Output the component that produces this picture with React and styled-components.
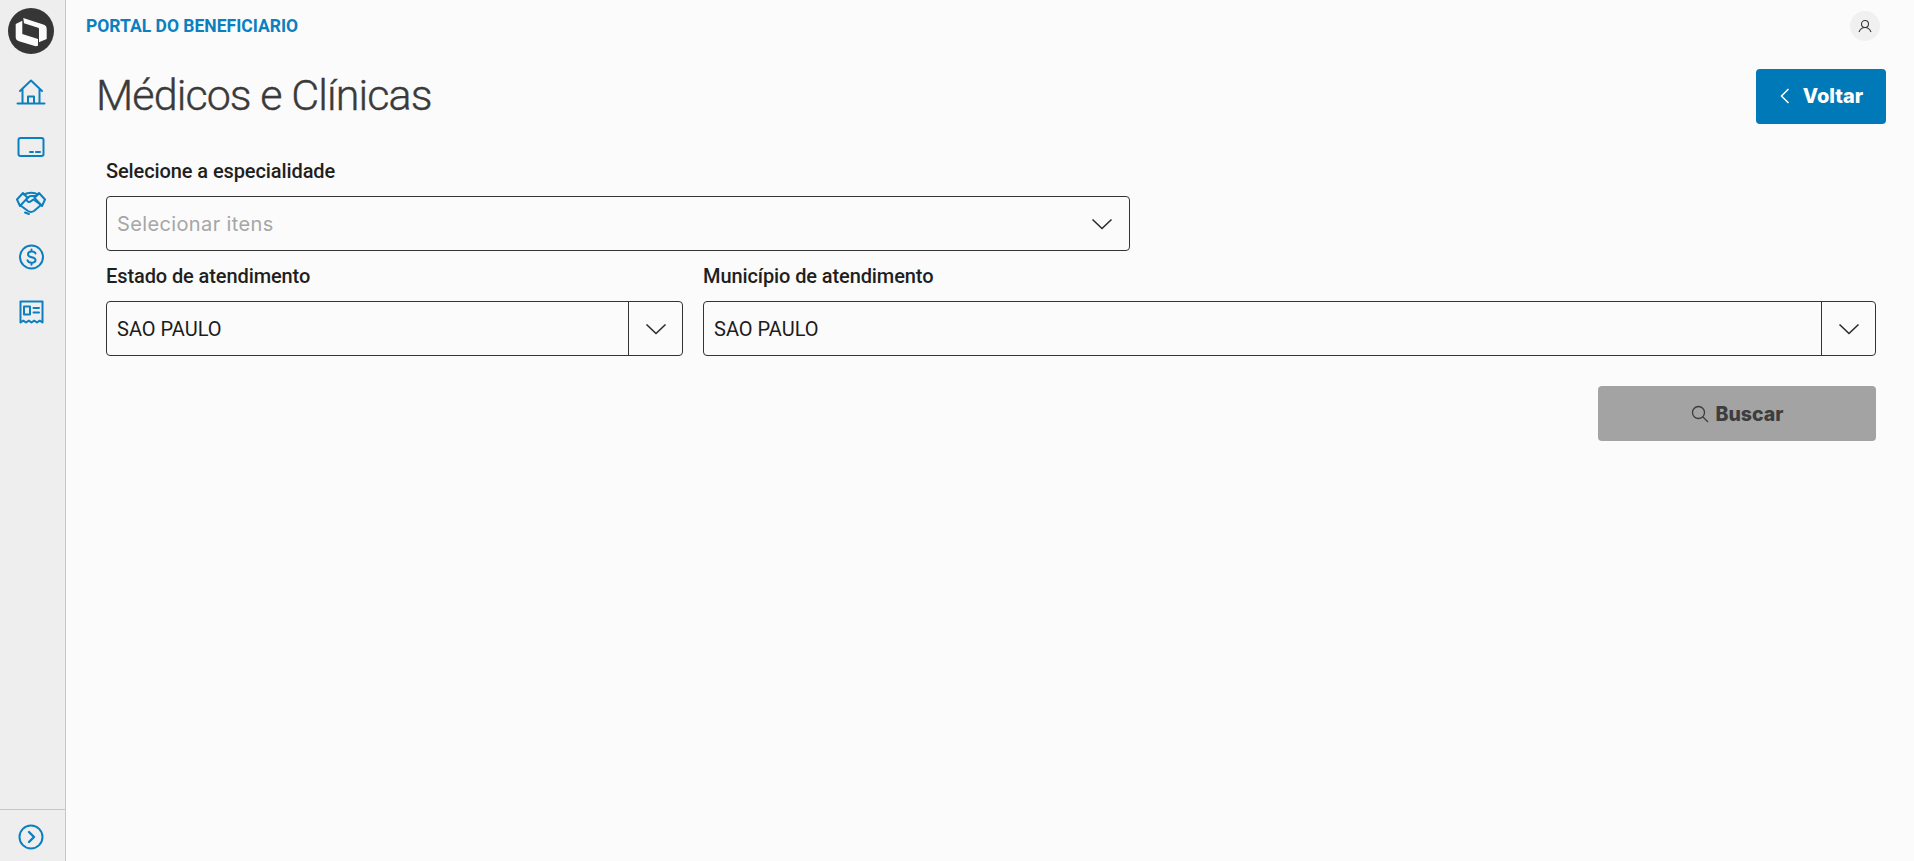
import React from "react";
import styled, { createGlobalStyle } from "styled-components";

const Global = createGlobalStyle`
  html, body { margin: 0; padding: 0; height: 100%; background: #fbfbfb; overflow: hidden; }
  #root { height: 100%; }
  * { box-sizing: border-box; }
`;

const Shell = styled.div`
  display: flex;
  width: 1914px;
  height: 861px;
  background: #fbfbfb;
  font-family: Roboto, "Liberation Sans", sans-serif;
`;

const Sidebar = styled.aside`
  width: 66px;
  flex: none;
  display: flex;
  flex-direction: column;
  background: #eeeeee;
  border-right: 1px solid #c6c6c6;
`;

const LogoWrap = styled.div`
  height: 62px;
  padding: 8px 3px 0 0;
  display: flex;
  justify-content: center;
`;

const Nav = styled.nav`
  display: flex;
  flex-direction: column;
  align-items: center;
  flex: 1;
  padding: 15px 3px 0 0;
  gap: 25px;
`;

const NavIcon = styled.svg`
  width: 30px;
  height: 30px;
  display: block;
  fill: none;
  stroke: #0c7fbf;
  stroke-width: 2;
  stroke-linecap: round;
  stroke-linejoin: round;
`;

const SideFooter = styled.div`
  height: 52px;
  flex: none;
  padding: 2px 3px 0 0;
  border-top: 1px solid #c6c6c6;
  display: flex;
  align-items: center;
  justify-content: center;
`;

const Main = styled.main`
  flex: 1;
  min-width: 0;
  display: flex;
  flex-direction: column;
`;

const TopBar = styled.header`
  height: 51px;
  flex: none;
  padding: 0 34px 0 20px;
  display: flex;
  align-items: center;
  justify-content: space-between;
`;

const Brand = styled.span`
  font-size: 17.5px;
  font-weight: 700;
  color: #0c7fbf;
`;

const Avatar = styled.span`
  width: 30px;
  height: 30px;
  border-radius: 50%;
  background: #f0f0f0;
  display: flex;
  align-items: center;
  justify-content: center;
`;

const TitleRow = styled.div`
  display: flex;
  align-items: flex-start;
  justify-content: space-between;
  padding: 18px 28px 0 30px;
  height: 81px;
`;

const Title = styled.h1`
  margin: -1px 0 0;
  font-size: 43px;
  line-height: 55px;
  font-weight: 300;
  letter-spacing: -0.9px;
  color: #3a3a3a;
  -webkit-text-stroke: 0.4px #3a3a3a;
`;

const BackButton = styled.button`
  width: 130px;
  height: 55px;
  padding: 0 0 2px;
  border: 0;
  border-radius: 4px;
  background: #0079b8;
  color: #ffffff;
  font: 800 20px Inter, "Open Sans", sans-serif;
  display: flex;
  align-items: center;
  justify-content: center;
  gap: 12px;
`;

const Form = styled.div`
  padding: 27px 38px 0 40px;
  display: flex;
  flex-direction: column;
`;

const Field = styled.div`
  display: flex;
  flex-direction: column;
  width: ${p => p.$width || "auto"};
  flex: ${p => p.$flex || "none"};
  min-width: 0;
`;

const Label = styled.label`
  font-size: 20px;
  font-weight: 500;
  line-height: 24px;
  height: 24px;
  margin-bottom: 13px;
  color: #1f1f1f;
  letter-spacing: -0.1px;
`;

const Box = styled.div`
  height: 55px;
  border: 1px solid #333333;
  border-radius: 4px;
  display: flex;
  align-items: center;
  background: #fbfbfb;
`;

const Value = styled.span`
  flex: 1;
  padding-left: 10px;
  font-size: 20px;
  color: #1c1c1c;
  white-space: nowrap;
`;

const Placeholder = styled.span`
  flex: 1;
  padding-left: 10px;
  font: 400 20px Inter, "Open Sans", sans-serif;
  letter-spacing: 0.37px;
  color: #a6a6a6;
`;

const Arrow = styled.span`
  width: 54px;
  height: 100%;
  flex: none;
  display: flex;
  align-items: center;
  justify-content: center;
  border-left: ${p => (p.$divided ? "1px solid #333333" : "0")};
`;

const Row = styled.div`
  display: flex;
  gap: 20px;
  margin-top: 13px;
`;

const Actions = styled.div`
  display: flex;
  justify-content: flex-end;
  margin-top: 30px;
`;

const SearchButton = styled.button`
  width: 278px;
  height: 55px;
  border: 0;
  border-radius: 4px;
  background: #a3a3a3;
  color: #3d3d3d;
  font: 800 19.5px Inter, "Open Sans", sans-serif;
  display: flex;
  align-items: center;
  justify-content: center;
  gap: 7px;
`;

const Chevron = () => (
  <svg width="24" height="14" viewBox="0 0 24 14" fill="none" stroke="#2b2b2b" strokeWidth="1.6">
    <path d="M2.5 2.5 12 11.5l9.500-9" />
  </svg>
);

const Logo = () => (
  <svg width="46" height="46" viewBox="0 0 46 46">
    <circle cx="23" cy="23" r="23" fill="#363636" />
    <path fill="#fbfbfb" d="M15.300 10 36 16.700c1.800.6 2.700 2.200 2.700 4.300v10L31 34.300V21c0-.6-.3-1-.9-1.200L16 15.300Z" />
    <path fill="#fbfbfb" d="M7.700 16 14.300 12.700V26L30 31v6.700L27.700 38.300 11 33.300c-2.200-.7-3.300-2-3.300-4Z" />
  </svg>
);

export default function App() {
  return (
    <Shell>
      <Global />
      <Sidebar>
        <LogoWrap><Logo /></LogoWrap>
        <Nav>
          <NavIcon viewBox="0 0 30 30">
            <path d="M4 14 15 3.500 26 14M6.500 12V26.500M23.500 12V26.500M1.500 26.500h27M12 26.500V19.500h6v7" />
          </NavIcon>
          <NavIcon viewBox="0 0 30 30">
            <rect x="2.500" y="6" width="25" height="18" rx="2" />
            <path d="M14 20h3M20 20h4" />
          </NavIcon>
          <NavIcon viewBox="0 0 30 30">
            <path d="M1 12.500 7 6l4.500 4.800L4 19ZM29 12.500 23 6l-4.500 4.800L26 19Z" />
            <path d="M8 7.500c4-2 10-2.500 14 0M20.500 9H15c-2 0-3.500 2-5 4l2.500 2c2 .3 3.500-2 5-2.500l6.500 4.800" />
            <path d="M4.500 18.500 12 24c2 1.300 4 1.300 6 0l7-6M9 25.500l4 1.500" />
          </NavIcon>
          <NavIcon viewBox="0 0 30 30">
            <circle cx="15.500" cy="15" r="11.500" />
            <path d="M19.500 11.500C19 10 17.500 9.500 15.500 9.500S12 10.500 12 12.500c0 4 7.500 1.500 7.500 5.500 0 1.700-1.500 2.800-4 2.800s-3.500-1-4-2.500M15.500 7.500v2M15.500 20.800v2" />
          </NavIcon>
          <NavIcon viewBox="0 0 30 30">
            <path d="M4.500 4.500h22v21l-2.800-1.800-2.700 1.800-2.800-1.800-2.700 1.800-2.700-1.800-2.800 1.800-2.700-1.800-2.800 1.800Z" />
            <rect x="8" y="9.500" width="6" height="8" />
            <path d="M17.500 11h5.500M17.500 15.500h5.500" />
          </NavIcon>
        </Nav>
        <SideFooter>
          <NavIcon viewBox="0 0 30 30">
            <circle cx="15" cy="15" r="11.500" />
            <path d="M13 10l5 5-5 5" strokeWidth="2.400" />
          </NavIcon>
        </SideFooter>
      </Sidebar>
      <Main>
        <TopBar>
          <Brand>PORTAL DO BENEFICIARIO</Brand>
          <Avatar>
            <svg width="14" height="14" viewBox="0 0 14 14" fill="none" stroke="#333" strokeWidth="1.100">
              <circle cx="7" cy="5" r="3.500" />
              <path d="M1 13c1-2.500 3-4.500 6-4.500s5 2 6 4.500" />
            </svg>
          </Avatar>
        </TopBar>
        <TitleRow>
          <Title>Médicos e Clínicas</Title>
          <BackButton>
            <svg width="12" height="18" viewBox="0 0 12 18" fill="none" stroke="#fff" strokeWidth="1.500">
              <path d="M9.500 2 2.500 9l7 7" />
            </svg>
            Voltar
          </BackButton>
        </TitleRow>
        <Form>
          <Field $width="1024px">
            <Label>Selecione a especialidade</Label>
            <Box>
              <Placeholder>Selecionar itens</Placeholder>
              <Arrow><Chevron /></Arrow>
            </Box>
          </Field>
          <Row>
            <Field $width="577px">
              <Label>Estado de atendimento</Label>
              <Box>
                <Value>SAO PAULO</Value>
                <Arrow $divided><Chevron /></Arrow>
              </Box>
            </Field>
            <Field $flex="1">
              <Label>Município de atendimento</Label>
              <Box>
                <Value>SAO PAULO</Value>
                <Arrow $divided><Chevron /></Arrow>
              </Box>
            </Field>
          </Row>
          <Actions>
            <SearchButton>
              <svg width="18" height="18" viewBox="0 0 18 18" fill="none" stroke="#3d3d3d" strokeWidth="1.300">
                <circle cx="7.500" cy="7.500" r="6" />
                <path d="M12 12l5 5" />
              </svg>
              Buscar
            </SearchButton>
          </Actions>
        </Form>
      </Main>
    </Shell>
  );
}
